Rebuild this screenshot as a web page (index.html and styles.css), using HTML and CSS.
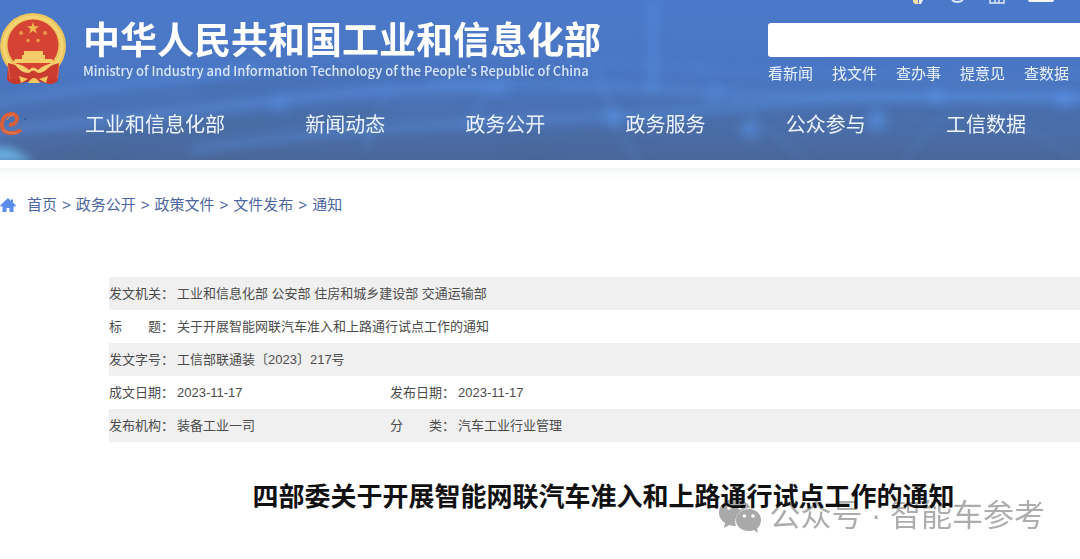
FILE: index.html
```html
<!DOCTYPE html>
<html lang="zh-CN">
<head>
<meta charset="utf-8">
<meta name="viewport" content="width=device-width, initial-scale=1">
<title>四部委关于开展智能网联汽车准入和上路通行试点工作的通知</title>
<link rel="stylesheet" href="styles.css">
</head>
<body>
<header class="header">
  <svg class="header-art" viewBox="0 0 1080 160" preserveAspectRatio="none" aria-hidden="true">
    <defs>
      <filter id="soft" x="-20%" y="-50%" width="140%" height="200%"><feGaussianBlur stdDeviation="5"/></filter>
      <filter id="glow" x="-100%" y="-100%" width="300%" height="300%"><feGaussianBlur stdDeviation="6"/></filter>
    </defs>
    <g fill="none" stroke="#5e97ea" filter="url(#soft)">
      <path d="M-10 104C90 84 180 80 260 68" stroke-width="8" opacity=".35"/>
      <path d="M-10 132C120 118 220 108 300 98S440 86 500 88" stroke-width="9" opacity=".4"/>
      <path d="M190 150C330 128 480 122 620 116S780 92 1090 96" stroke-width="10" opacity=".3"/>
      <path d="M430 82C600 84 650 90 760 94S980 94 1090 100" stroke-width="8" opacity=".35"/>
      <path d="M600 62C750 74 900 80 1090 76" stroke-width="5" opacity=".2"/>
      <path d="M653 0V92" stroke-width="12" opacity=".3"/>
      <path d="M594 60L614 120L640 165M390 80L365 150M494 88L460 130" stroke-width="5" opacity=".25"/>
      <path d="M690 60L810 165M960 95L900 165M980 100L1080 160" stroke-width="4" opacity=".2"/>
    </g>
    <g fill="none" stroke="#466694" filter="url(#soft)">
      <path d="M40 170C140 126 250 120 390 112" stroke-width="10" opacity=".4"/>
      <path d="M200 92C320 72 420 70 560 76" stroke-width="7" opacity=".3"/>
      <path d="M500 150C640 136 720 104 1080 116" stroke-width="9" opacity=".3"/>
    </g>
    <g fill="#5c9cf5" filter="url(#glow)">
      <circle cx="614" cy="118" r="9" opacity=".45"/><circle cx="750" cy="129" r="9" opacity=".55"/>
      <circle cx="877" cy="120" r="10" opacity=".55"/><circle cx="936" cy="96" r="7" opacity=".5"/>
      <circle cx="1064" cy="99" r="8" opacity=".5"/><circle cx="714" cy="96" r="7" opacity=".4"/>
      <circle cx="502" cy="88" r="7" opacity=".4"/><circle cx="280" cy="104" r="8" opacity=".4"/>
    </g>
    <path d="M-10 148C8 144 20 152 34 162H-10Z" fill="#72c2f5" opacity=".8" filter="url(#soft)"/>
  </svg>

  <div class="masthead">
    <div class="brand">
      <svg class="emblem" viewBox="0 0 68 74" role="img" aria-label="国徽">
        <path d="M8 51L7 68Q13 74 22 71L34 68L45 71Q54 74 58 68L59 51Z" fill="#c7372c"/>
        <circle cx="33" cy="34" r="33" fill="#edc55c"/>
        <circle cx="33" cy="34" r="29" fill="none" stroke="#f3d576" stroke-width="3"/>
        <circle cx="33" cy="33" r="25.500" fill="#d54334"/>
        <path d="M33 10l1.500 4.300h4.600l-3.700 2.700 1.400 4.400-3.800-2.700-3.800 2.700 1.400-4.400-3.700-2.700h4.600z" fill="#f0b950"/>
        <g fill="#e89b4c"><circle cx="21" cy="21" r="2"/><circle cx="45" cy="21" r="2"/><circle cx="28" cy="28.500" r="1.800"/><circle cx="38" cy="28.500" r="1.800"/></g>
        <path d="M24 39h19v4h2v4h7l2 4H13l2-4h7v-4h2z" fill="#f4cd68"/>
        <path d="M8 51Q18 53 25 60L33 55L42 60Q50 53 59 51L57 67L9 67Z" fill="#cb3b2f"/>
        <path d="M14 51Q24 53 29 58Q33 53 38 58Q43 53 53 51Q45 61 38 61Q33 56 29 61Q20 61 14 51Z" fill="#f2cf6c"/>
        <path d="M19 64l9 3-7 4zM48 64l-9 3 7 4zM28 71q6-10 12 0z" fill="#f0c65f"/>
        <path d="M8 54l2 13M59 54l-2 13" stroke="#e0654c" fill="none"/>
      </svg>
      <div class="brand-text">
        <h1 class="brand-name">中华人民共和国工业和信息化部</h1>
        <p class="brand-en">Ministry of Industry and Information Technology of the People's Republic of China</p>
      </div>
    </div>

    <div class="tools">
      <div class="tool-icons" aria-hidden="true">
        <svg class="tool-icon" viewBox="0 0 18 10"><path d="M5 0h5v2l1 2H7L5 2z" fill="#f4dfa8"/><path d="M11 0h4l-2 4h-2z" fill="#e9edf5"/></svg>
        <svg class="tool-icon" viewBox="0 0 18 10"><path d="M4 0Q9 4 15 0" fill="none" stroke="#dde7f7" stroke-width="2"/></svg>
        <svg class="tool-icon" viewBox="0 0 18 10"><path d="M2 0V3H16V0M7 0V3M11 0V3" fill="none" stroke="#dde7f7" stroke-width="1.500"/></svg>
        <svg class="tool-icon tool-icon-wide" viewBox="0 0 26 10"><path d="M0 0H26Q26 2 24 2H2Q0 2 0 0Z" fill="#f3f6fc"/></svg>
      </div>
      <input class="search" type="search" aria-label="搜索">
      <nav class="quick" aria-label="快捷入口">
        <a href="#">看新闻</a><a href="#">找文件</a><a href="#">查办事</a><a href="#">提意见</a><a href="#">查数据</a>
      </nav>
    </div>
  </div>

  <div class="navbar">
    <svg class="e-logo" viewBox="0 0 28 28" aria-hidden="true">
      <path d="M9 15Q16 15 17 9Q17 4 11 4Q3 5 2 13Q1 23 11 23Q17 23 21 20" fill="none" stroke="#d85f3d" stroke-width="4"/>
      <path d="M7 10Q9 6 14 4M4 20Q8 24 17 23" fill="none" stroke="#ed8552"/>
      <circle cx="25" cy="9" r="1" fill="#345293"/>
    </svg>
    <nav class="nav" aria-label="主导航">
      <a href="#">工业和信息化部</a><a href="#">新闻动态</a><a href="#">政务公开</a><a href="#">政务服务</a><a href="#">公众参与</a><a href="#">工信数据</a>
    </nav>
  </div>
</header>

<main class="main">
  <nav class="crumbs" aria-label="当前位置">
    <svg class="home" viewBox="0 0 16 16" aria-hidden="true"><path d="M8 1L0 8.500L1 9.500H2.500V15H6.500V11H9.500V15H13.500V9.500H15L16 8.500L13 5.600V2.500H11V4Z" fill="#5b8cec"/></svg>
    <a href="#">首页</a><span>&gt;</span><a href="#">政务公开</a><span>&gt;</span><a href="#">政策文件</a><span>&gt;</span><a href="#">文件发布</a><span>&gt;</span><a href="#">通知</a>
  </nav>

  <article class="article">
    <table class="meta">
      <tbody>
        <tr><th class="label" scope="row">发文机关：</th><td colspan="3">工业和信息化部 公安部 住房和城乡建设部 交通运输部</td></tr>
        <tr><th class="label" scope="row">标　　题：</th><td colspan="3">关于开展智能网联汽车准入和上路通行试点工作的通知</td></tr>
        <tr><th class="label" scope="row">发文字号：</th><td colspan="3">工信部联通装〔2023〕217号</td></tr>
        <tr><th class="label" scope="row">成文日期：</th><td class="first">2023-11-17</td><th class="label" scope="row">发布日期：</th><td>2023-11-17</td></tr>
        <tr><th class="label" scope="row">发布机构：</th><td class="first">装备工业一司</td><th class="label" scope="row">分　　类：</th><td>汽车工业行业管理</td></tr>
      </tbody>
    </table>
    <h2 class="title">四部委关于开展智能网联汽车准入和上路通行试点工作的通知</h2>
  </article>
</main>

<div class="watermark">
  <svg class="wechat" viewBox="0 0 44 34" aria-hidden="true">
    <path d="M16 0C7 0 0 6 0 13.500C0 18 2.500 21.500 6 24L5 29L10.500 26Q13 27 16 27H17C14 17 22 9 31 9C30 4 24 0 16 0Z" fill="#a9a9a9"/>
    <path d="M30 10C22 10 17 15 17 21C17 27 22 32 30 32Q32.500 32 35 31L39 34L38 29.500Q42 26 42 21C42 15 37 10 30 10Z" fill="#a9a9a9"/>
    <g fill="#fff"><circle cx="10" cy="9" r="1.800"/><circle cx="21" cy="9" r="1.800"/><circle cx="25.500" cy="17" r="1.800"/><circle cx="34" cy="17" r="1.800"/></g>
  </svg>
  <span>公众号 · 智能车参考</span>
</div>
</body>
</html>
```

FILE: styles.css
```css
* { box-sizing: border-box; }

body {
  margin: 0;
  position: relative;
  overflow-x: hidden;
  background: #fff;
  color: #4c4c4c;
  font-family: "Liberation Sans", "Noto Sans CJK SC", sans-serif;
}

a { color: inherit; text-decoration: none; white-space: nowrap; }

.header {
  position: relative;
  overflow: hidden;
  padding-bottom: 11px;
  color: #eef4ff;
  background: linear-gradient(#4b79ca 0, #4a76c3 45%, #4b70ae 75%, #4a6799 100%);
  font-family: "Noto Sans CJK SC", sans-serif;
}

.header-art { position: absolute; inset: 0; width: 100%; height: 100%; }

.masthead {
  position: relative;
  display: flex;
  justify-content: space-between;
}

.brand { display: flex; gap: 15px; padding-top: 12px; }
.emblem { width: 68px; height: 74px; }
.brand-text { padding-top: 4px; }

.brand-name {
  margin: 0;
  color: #fff;
  font-size: 37px;
  font-weight: 700;
  line-height: 44px;
  white-space: nowrap;
}

.brand-en {
  margin: 1px 0 0;
  color: #d9e5fa;
  font-size: 13px;
  font-weight: 500;
  line-height: 20px;
  white-space: nowrap;
}

.tools { flex: none; width: 312px; }

.tool-icons {
  display: flex;
  justify-content: flex-end;
  gap: 22px;
  height: 23px;
  padding-right: 26px;
}
.tool-icon { width: 18px; height: 10px; }
.tool-icon-wide { width: 26px; }

.search {
  display: block;
  width: 100%;
  height: 34px;
  padding: 0 12px;
  border: 0;
  border-radius: 3px 0 0 3px;
  background: #fff;
  font-size: 15px;
}

.quick {
  display: flex;
  gap: 19px;
  padding-top: 6px;
  font-size: 15px;
  line-height: 20px;
}

.navbar { position: relative; display: flex; align-items: center; padding-top: 13px; }
.e-logo { flex: none; width: 28px; height: 28px; }

.nav {
  flex: 1;
  display: flex;
  justify-content: space-between;
  padding: 0 54px 0 57px;
  font-size: 20px;
  line-height: 50px;
}

.main {
  margin-top: 8px;
  border-top: 3px solid #f4f5f5;
  background: linear-gradient(#f8fbfd, #fff 10px);
}

.crumbs {
  display: flex;
  align-items: center;
  gap: 5px;
  padding-top: 24px;
  color: #4e669f;
  font-size: 15px;
  line-height: 20px;
}
.home { width: 16px; height: 16px; margin-right: 6px; }

.article { padding: 62px 0 48px 109px; }

.meta {
  width: 100%;
  border-collapse: collapse;
  font-size: 13px;
  line-height: 19px;
}
.meta tr:nth-child(odd) { background: #f0f0f0; }
.meta th, .meta td { padding: 7px 0; text-align: left; font-weight: 400; white-space: nowrap; }
.meta .label { width: 68px; }
.meta .first { width: 213px; }

.title {
  margin: 35px 0 0;
  padding-left: 18px;
  color: #111;
  font-size: 26px;
  font-weight: 700;
  line-height: 40px;
  text-align: center;
  white-space: nowrap;
}

.watermark {
  position: absolute;
  right: 35px;
  bottom: 27px;
  display: flex;
  align-items: center;
  gap: 6px;
  color: #adadad;
  font-size: 31px;
  line-height: 44px;
  white-space: nowrap;
  mix-blend-mode: multiply;
}
.wechat { width: 44px; height: 34px; }
```
